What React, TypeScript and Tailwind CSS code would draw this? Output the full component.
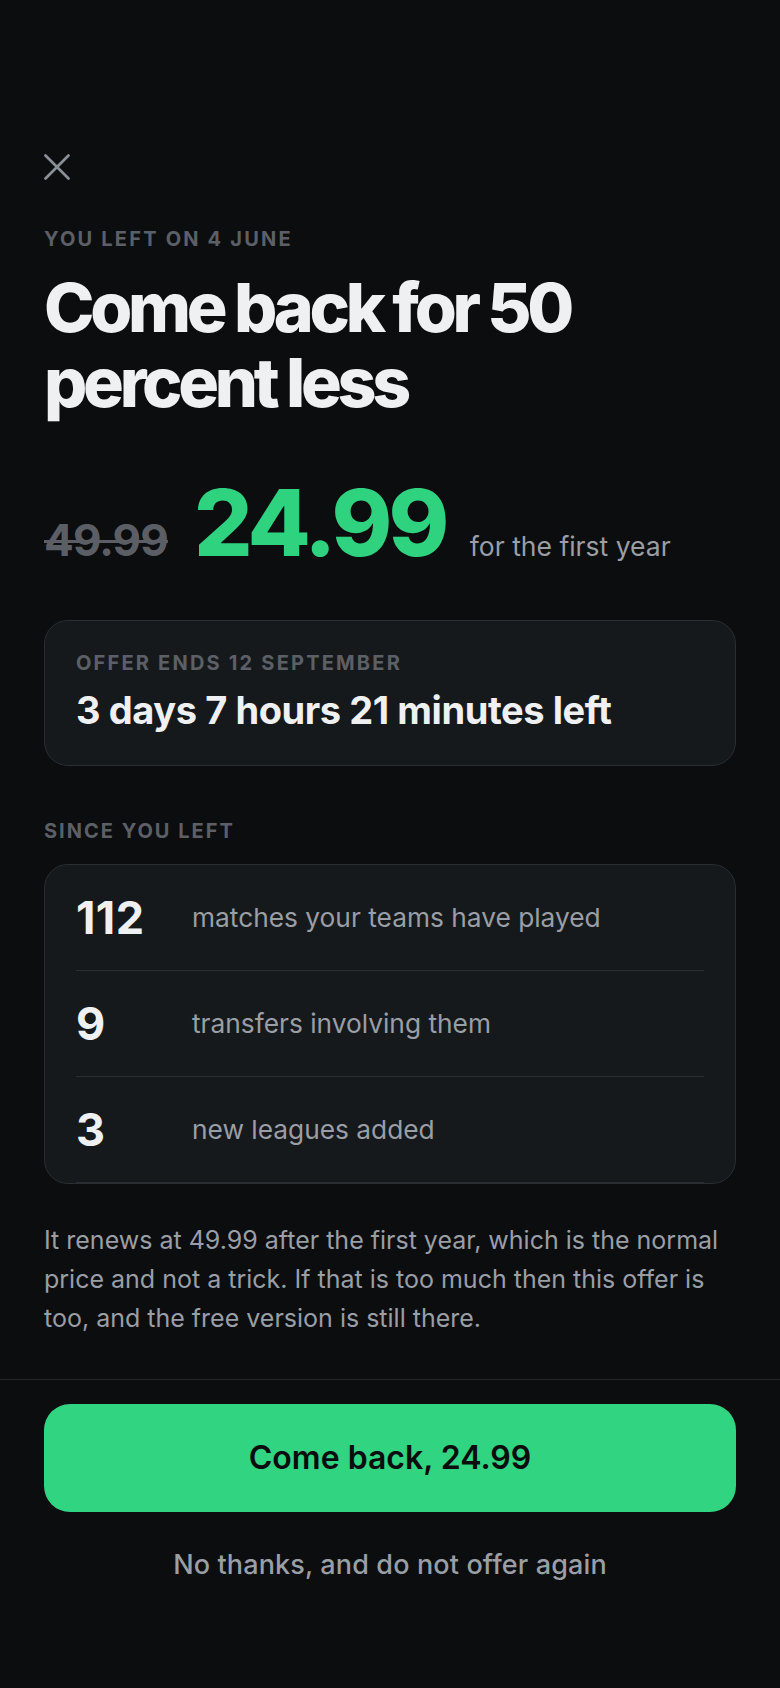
import React from "react";

const stats = [
  { n: "112", label: "matches your teams have played" },
  { n: "9", label: "transfers involving them" },
  { n: "3", label: "new leagues added" },
];

export default function App() {
  return (
    <div
      className="min-h-screen w-full bg-[#0c0d0f] text-[#eef0f2]"
      style={{ fontFamily: "Inter, 'Noto Sans', sans-serif" }}
    >
      <div className="px-[44px] pt-[154px]">
        <button className="block h-[26px] w-[26px] text-[#8b9096]" aria-label="Close">
          <svg width="26" height="26" viewBox="0 0 26 26" fill="none">
            <path d="M1.5 1.5 L24.5 24.5 M24.5 1.5 L1.5 24.5" stroke="currentColor" strokeWidth="2.7" strokeLinecap="round" />
          </svg>
        </button>

        <div className="mt-[47px] text-[20px] leading-[24px] font-bold uppercase tracking-[0.11em] text-[#5c6066]">
          You left on 4 June
        </div>

        <h1 className="mt-[19px] text-[68px] leading-[75px] font-extrabold tracking-[-0.063em] text-[#eef0f2]">
          Come back for 50
          <br />
          percent less
        </h1>

        <div className="mt-[57px] flex items-baseline">
          <span className="text-[44px] leading-none font-bold tracking-[-0.02em] text-[#5b5f65] line-through decoration-[3px] decoration-[#5b5f65]">
            49.99
          </span>
          <span className="ml-[26px] text-[92px] leading-none font-extrabold tracking-[-0.04em] text-[#2ed27f]">
            24.99
          </span>
          <span className="ml-[24px] text-[26.5px] leading-none text-[#9a9ea5]">
            for the first year
          </span>
        </div>

        <div className="mt-[51px] rounded-[24px] border border-[#2a2d31] bg-[#16191c] px-[31px] pt-[30px] pb-[34px]">
          <div className="text-[20px] leading-[24px] font-bold uppercase tracking-[0.11em] text-[#5c6066]">
            Offer ends 12 September
          </div>
          <div className="mt-[14px] text-[38px] leading-[42px] font-bold tracking-[-0.011em] text-[#eef0f2]">
            3 days 7 hours 21 minutes left
          </div>
        </div>

        <div className="mt-[53px] text-[20px] leading-[24px] font-bold uppercase tracking-[0.1em] text-[#5c6066]">
          Since you left
        </div>

        <div className="mt-[21px] rounded-[24px] border border-[#2a2d31] bg-[#16191c] px-[31px]">
          {stats.map((s) => (
            <div key={s.n} className="flex h-[106px] items-center border-b border-[#2a2d31]">
              <div className="w-[116px] shrink-0 text-[45px] leading-none font-bold tracking-[0.01em] text-[#eef0f2]">
                {s.n}
              </div>
              <div className="text-[26.3px] leading-[32px] text-[#9a9ea5]">{s.label}</div>
            </div>
          ))}
        </div>

        <p className="mt-[37px] text-[25px] leading-[39px] text-[#9a9ea5]">
          It renews at 49.99 after the first year, which is the normal price and not a trick. If that is too much then this offer is too, and the free version is still there.
        </p>
      </div>

      <div className="mt-[41px] border-t border-[#222428] px-[44px] pt-[24px] pb-[60px]">
        <button className="flex h-[108px] w-full items-center justify-center rounded-[26px] bg-[#31d481] text-[32px] font-semibold text-[#0b0c0e]">
          Come back, 24.99
        </button>
        <div className="mt-[37px] text-center text-[27px] leading-[32px] font-medium tracking-[0.005em] text-[#9a9ea5]">
          No thanks, and do not offer again
        </div>
      </div>
    </div>
  );
}
